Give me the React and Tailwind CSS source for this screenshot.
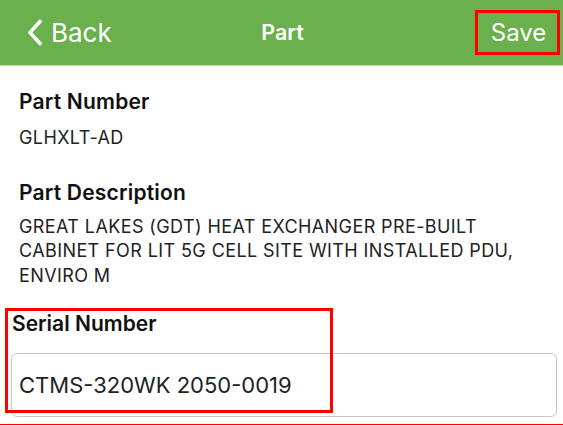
import React from "react";

function Field({ label, children, gap }) {
  return (
    <div>
      <div className="text-[21px] leading-[24px] font-semibold tracking-[0.2px] text-[#111]">{label}</div>
      <div className={`${gap} text-[18px] leading-[24.5px] tracking-[0.4px] text-[#222]`}>{children}</div>
    </div>
  );
}

export default function App() {
  return (
    <div className="w-[563px] h-[425px] bg-white overflow-hidden flex flex-col font-['Inter',sans-serif]">
      {/* Nav bar */}
      <div className="h-[66px] shrink-0 bg-[#6ab04c] border-b border-[#c8c8c8] flex items-center pl-[5px] pr-[3px] text-white">
        <div className="flex-1 flex items-center">
          <button className="flex items-center gap-[8px] pl-[22px]">
            <svg width="16" height="27" viewBox="0 0 16 27" fill="none">
              <path d="M13 2.5L3 13.5L13 24.5" stroke="white" strokeWidth="3.6" strokeLinecap="round" strokeLinejoin="round" />
            </svg>
            <span className="text-[26px] leading-none">Back</span>
          </button>
        </div>
        <div className="text-[21.5px] font-semibold leading-none">Part</div>
        <div className="flex-1 flex justify-end">
          <button className="w-[85px] h-[45px] border-[3px] border-[#ff0000] flex items-center justify-center text-[24px] leading-none pl-[2px]">
            Save
          </button>
        </div>
      </div>

      {/* Content */}
      <div className="flex-1 flex flex-col">
        <div className="pl-[19px] pr-[6px] pt-[24px] flex flex-col gap-[30px]">
          <Field label="Part Number" gap="mt-[12px]">GLHXLT-AD</Field>
          <Field label="Part Description" gap="mt-[10px]">
            GREAT LAKES (GDT) HEAT EXCHANGER PRE-BUILT<br />
            CABINET FOR LIT 5G CELL SITE WITH INSTALLED PDU,<br />
            ENVIRO M
          </Field>
        </div>

        <div className="relative mt-[24px] pl-[11px] pr-[6px]">
          <div className="text-[21px] leading-[24px] font-semibold text-[#111] pl-[1px]">Serial Number</div>
          <div className="mt-[17px] h-[64px] rounded-[6px] border border-[#c6c6c6] flex items-center px-[7px] text-[22px] text-[#222]">
            CTMS-320WK 2050-0019
          </div>
          <div className="absolute left-[5px] top-[-4px] w-[328px] h-[105px] border-[3px] border-[#ff0000] pointer-events-none" />
        </div>
      </div>
      <div className="h-px bg-[#ff0000] shrink-0" />
    </div>
  );
}
